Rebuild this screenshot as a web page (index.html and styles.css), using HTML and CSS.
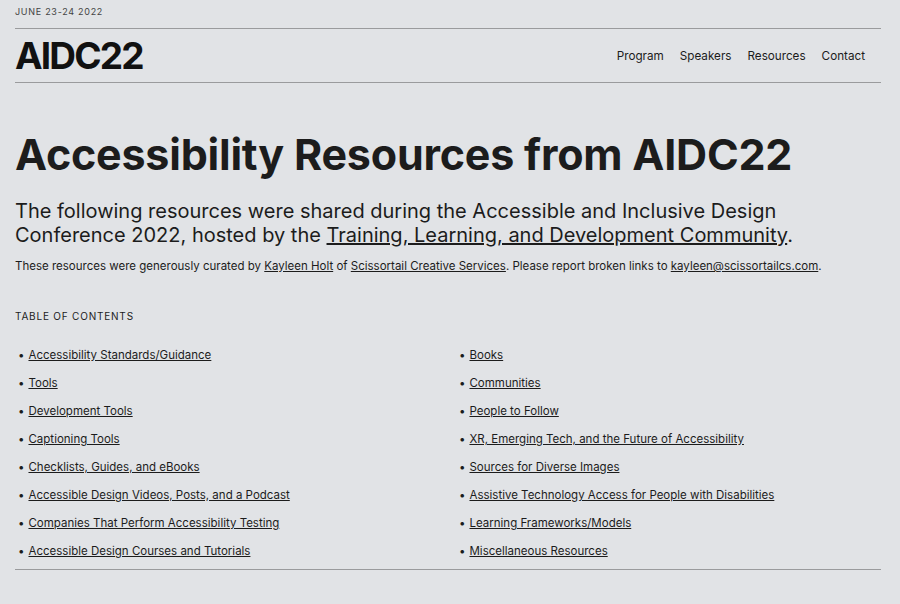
FILE: index.html
```html
<!DOCTYPE html>
<html lang="en">
<head>
    <meta charset="UTF-8">
    <title>Accessibility Resources from AIDC22</title>
    <link rel="stylesheet" href="styles.css">
</head>
<body>
    <div class="page">
        <div class="dates">June 23-24 2022</div>
        <header class="site-header">
            <a class="logo" href="#">AIDC22</a>
            <nav class="nav">
                <a href="#">Program</a>
                <a href="#">Speakers</a>
                <a href="#">Resources</a>
                <a href="#">Contact</a>
            </nav>
        </header>

        <main>
            <h1>Accessibility Resources from AIDC22</h1>
            <p class="lead">The following resources were shared during the Accessible and Inclusive Design Conference 2022, hosted by the <a href="#">Training, Learning, and Development Community</a>.</p>
            <p class="credits">These resources were generously curated by <a href="#">Kayleen Holt</a> of <a href="#">Scissortail Creative Services</a>. Please report broken links to <a href="#">kayleen@scissortailcs.com</a>.</p>

            <section class="toc">
                <h2>Table of Contents</h2>
                <ul class="toc-list">
                    <li><a href="#">Accessibility Standards/Guidance</a></li>
                    <li><a href="#">Books</a></li>
                    <li><a href="#">Tools</a></li>
                    <li><a href="#">Communities</a></li>
                    <li><a href="#">Development Tools</a></li>
                    <li><a href="#">People to Follow</a></li>
                    <li><a href="#">Captioning Tools</a></li>
                    <li><a href="#">XR, Emerging Tech, and the Future of Accessibility</a></li>
                    <li><a href="#">Checklists, Guides, and eBooks</a></li>
                    <li><a href="#">Sources for Diverse Images</a></li>
                    <li><a href="#">Accessible Design Videos, Posts, and a Podcast</a></li>
                    <li><a href="#">Assistive Technology Access for People with Disabilities</a></li>
                    <li><a href="#">Companies That Perform Accessibility Testing</a></li>
                    <li><a href="#">Learning Frameworks/Models</a></li>
                    <li><a href="#">Accessible Design Courses and Tutorials</a></li>
                    <li><a href="#">Miscellaneous Resources</a></li>
                </ul>
            </section>
        </main>
    </div>
</body>
</html>
```

FILE: styles.css
```css
body {
    font-family: Inter, "Liberation Sans", sans-serif;
    background: #e1e3e6;
    color: #1c1c1c;
    margin: 0;
    padding: 0;
}

a {
    color: inherit;
}

.page {
    padding: 0 19px 0 15px;
}

.dates {
    font-size: 9px;
    line-height: 12px;
    letter-spacing: 0.08em;
    text-transform: uppercase;
    color: #444;
    padding: 6px 0 10px;
    border-bottom: 1px solid #9a9b9d;
}

.site-header {
    display: flex;
    align-items: center;
    justify-content: space-between;
    height: 53px;
    border-bottom: 1px solid #9a9b9d;
}

.logo {
    font-size: 37px;
    font-weight: 700;
    letter-spacing: -0.05em;
    text-decoration: none;
    color: #111;
}

.nav {
    display: flex;
    gap: 16px;
    padding-right: 16px;
}

    .nav a {
        font-size: 11.7px;
        text-decoration: none;
    }

h1 {
    font-size: 43px;
    font-weight: 700;
    letter-spacing: -0.005em;
    line-height: 52px;
    margin: 45px 0 19px;
}

.lead {
    font-size: 20px;
    line-height: 24px;
    margin: 0 0 11px;
}

.credits {
    font-size: 11.5px;
    line-height: 16px;
    margin: 0;
}

.toc {
    margin-top: 36px;
    border-bottom: 1px solid #9a9b9d;
    padding-bottom: 9px;
}

    .toc h2 {
        font-size: 10px;
        line-height: 12px;
        font-weight: 400;
        text-transform: uppercase;
        letter-spacing: 0.08em;
        margin: 0 0 24px;
    }

.toc-list {
    display: grid;
    grid-template-columns: 1fr 1fr;
    column-gap: 16px;
    row-gap: 10px;
    list-style: none;
    margin: 0;
    padding: 0;
}

    .toc-list li {
        font-size: 11.5px;
        line-height: 18px;
        display: flex;
        gap: 4px;
        padding-left: 3px;
    }

        .toc-list li::before {
            content: "\2022";
        }
```
